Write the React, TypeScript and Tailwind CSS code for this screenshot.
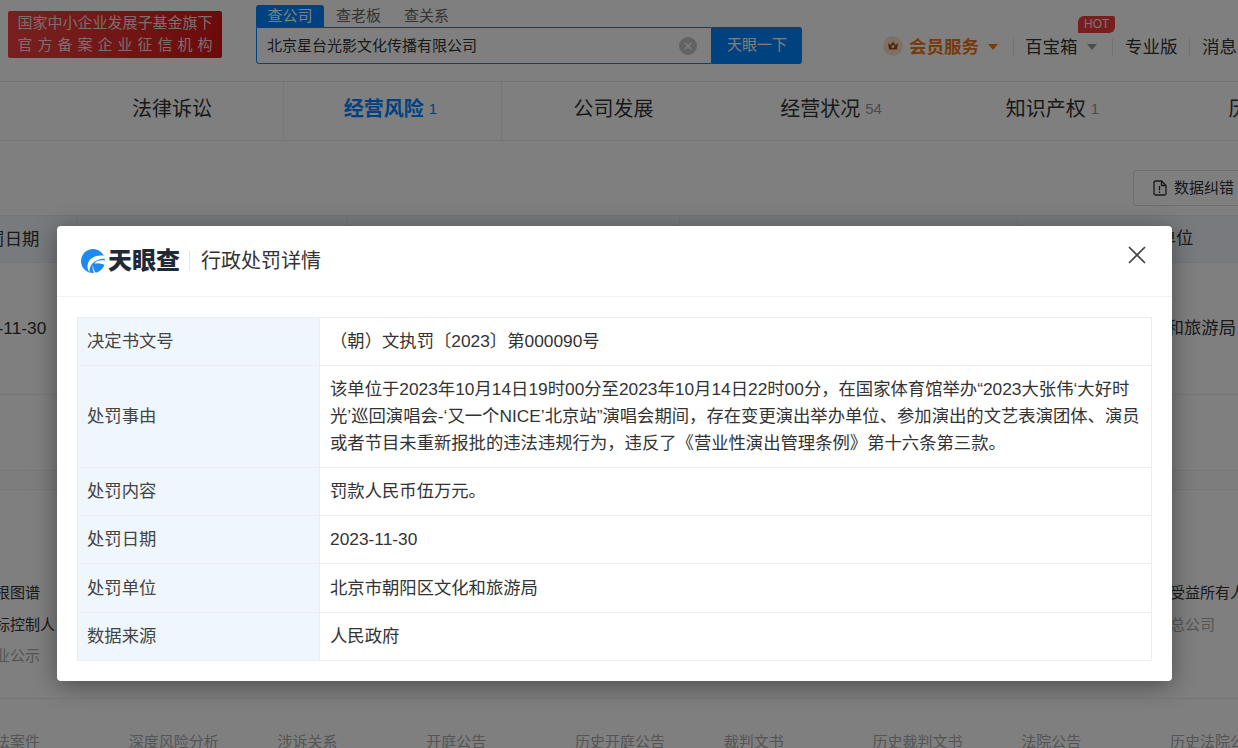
import { X } from 'lucide-react';

const FONT = "font-['Liberation_Sans','Noto_Sans_CJK_SC',sans-serif]";

const navItems = [
  { name: '法律诉讼', nudge: 'pr-[3px]' },
  { name: '经营风险', count: '1', active: true, nudge: 'pr-[4px]' },
  { name: '公司发展', nudge: 'pl-[4px]' },
  { name: '经营状况', count: '54', nudge: 'pl-[1px]' },
  { name: '知识产权', count: '1', nudge: 'pl-[6px]' },
  { name: '历史信息', nudge: '' },
];

const bottomLinks = ['执法案件', '深度风险分析', '涉诉关系', '开庭公告', '历史开庭公告', '裁判文书', '历史裁判文书', '法院公告', '历史法院公告'];

const rows = [
  { label: '决定书文号', value: '（朝）文执罚〔2023〕第000090号', height: 'h-[48px]' },
  {
    label: '处罚事由',
    value: '该单位于2023年10月14日19时00分至2023年10月14日22时00分，在国家体育馆举办“2023大张伟‘大好时光’巡回演唱会-‘又一个NICE’北京站”演唱会期间，存在变更演出举办单位、参加演出的文艺表演团体、演员或者节目未重新报批的违法违规行为，违反了《营业性演出管理条例》第十六条第三款。',
    height: 'h-[102px]',
  },
  { label: '处罚内容', value: '罚款人民币伍万元。', height: 'h-[48px]' },
  { label: '处罚日期', value: '2023-11-30', height: 'h-[48px]' },
  { label: '处罚单位', value: '北京市朝阳区文化和旅游局', height: 'h-[49px]' },
  { label: '数据来源', value: '人民政府', height: 'h-[48px]' },
];

function Caret({ className }: { className: string }) {
  return (
    <svg width="12" height="8" viewBox="0 0 12 8" className={className}>
      <path d="M1 1h10L6 7z" fill="currentColor" />
    </svg>
  );
}

function Logo() {
  return (
    <svg width="24" height="24" viewBox="0 0 24 24" className="shrink-0">
      <circle cx="12" cy="12" r="12" fill="#1e8af0" />
      {/* swoosh from the upper right down to the lower left */}
      <path d="M23.500 7C16 5.500 8.500 8.500 6.800 15c-.7 3-.1 6 1.700 8.300C8 17 11.500 10.500 24 9.500z" fill="#fff" />
      {/* notch on the right side */}
      <path d="M24 11.500c-4.500-.6-9 .2-10.500 3.200 3-1.200 6.500-.4 10.500 1.300z" fill="#fff" />
      <path d="M11.800 15.500c.2 3.500 1.200 6.300 3.200 8.700l-1.800.3c-1.500-2.800-2-6-1.400-9z" fill="#fff" />
    </svg>
  );
}

function Header() {
  return (
    <div className="flex h-[82px] border-b border-[#e8e8e8] bg-white">
      <div className="ml-[8px] mt-[11px] flex h-[47px] w-[214px] flex-col items-center justify-center rounded-[2px] bg-gradient-to-r from-[#f04040] to-[#d81414] pb-[2px] text-[15px] leading-[22px] text-[#f5dcdc]">
        <span>国家中小企业发展子基金旗下</span>
        <span className="mr-[-5px] tracking-[5px]">官方备案企业征信机构</span>
      </div>

      <div className="ml-[34px] mt-[5px] w-[546px]">
        <div className="flex h-[22px] items-center text-[15px]">
          <span className="flex h-[22px] w-[68px] items-center justify-center rounded-t-[3px] bg-[#0084ff] text-white">查公司</span>
          <span className="ml-[12px] text-[#666]">查老板</span>
          <span className="ml-[23px] text-[#666]">查关系</span>
        </div>
        <div className="flex h-[37px]">
          <div className="flex flex-1 items-center rounded-bl-[3px] border border-[#0084ff] bg-white pl-[10px] pr-[14px] text-[15px] text-[#333]">
            <span className="flex-1 pt-[1px]">北京星台光影文化传播有限公司</span>
            <span className="flex h-[18px] w-[18px] items-center justify-center rounded-full bg-[#c4c4c4]">
              <X size={12} strokeWidth={2.5} className="text-white" />
            </span>
          </div>
          <div className="flex w-[90px] items-center justify-center rounded-r-[3px] bg-[#0084ff] text-[15px] text-white">天眼一下</div>
        </div>
      </div>

      <div className="relative ml-[81px] flex h-[82px] items-center whitespace-nowrap pt-[12px] text-[17.5px] text-[#333]">
        <svg width="20" height="20" viewBox="0 0 20 20" className="shrink-0 -translate-y-[1px]">
          <circle cx="10" cy="10" r="10" fill="#fbe3cf" />
          <path d="M5 7l2.500 2L10 5.500 12.500 9 15 7l-1 6.500H6z" fill="#a34d0a" />
          <circle cx="10" cy="10.500" r="1.500" fill="#fbe3cf" />
        </svg>
        <span className="ml-[6px] font-bold text-[#e8791c]">会员服务</span>
        <Caret className="ml-[8px] text-[#f07a14]" />
        <span className="ml-[14px] h-[18px] w-px bg-[#e4e4e4]" />
        <span className="ml-[11px]">百宝箱</span>
        <Caret className="ml-[8.5px] text-[#999]" />
        <span className="absolute left-[195px] top-[16px] rounded-tl-[6px] rounded-tr-[2px] rounded-br-[6px] bg-[#f03c3c] px-[6px] text-[12px] leading-[17px] text-[#eee]">HOT</span>
        <span className="ml-[14px] h-[18px] w-px bg-[#e4e4e4]" />
        <span className="ml-[12px]">专业版</span>
        <span className="ml-[11.5px] h-[18px] w-px bg-[#e4e4e4]" />
        <span className="ml-[12px]">消息</span>
      </div>
    </div>
  );
}

function Nav() {
  return (
    <div className="flex h-[59px] overflow-hidden border-b border-[#eeeeee] bg-white pb-[4px] pl-[64px]">
      {navItems.map((item) => (
        <div
          key={item.name}
          className={item.active
            ? `-mb-[4px] flex w-[219px] shrink-0 items-center justify-center border-x border-[#eeeeee] pb-[4px] text-[20px] font-bold text-[#0084ff] ${item.nudge}`
            : `flex w-[219px] shrink-0 items-center justify-center text-[20px] text-[#333] ${item.nudge}`}
        >
          <span>{item.name}</span>
          {item.count && (
            <span className={item.active ? 'ml-[5px] text-[15px] font-normal text-[#0084ff]' : 'ml-[5px] text-[15px] text-[#999]'}>{item.count}</span>
          )}
        </div>
      ))}
    </div>
  );
}

function PageBody() {
  return (
    <div className="overflow-hidden text-[15px]">
      <div className="flex h-[65px] items-end overflow-hidden pl-[1133px]">
        <div className="flex h-[36px] w-[130px] shrink-0 items-center rounded-[3px] border border-[#dddddd] pl-[19px] text-[#333]">
          <svg width="14" height="16" viewBox="0 0 14 16" fill="none" stroke="#333" strokeWidth="1.300" className="shrink-0">
            <path d="M3 1h5.500L13 5.500v8a1.500 1.500 0 0 1-1.500 1.500h-9A1.500 1.500 0 0 1 1 13.500V3a2 2 0 0 1 2-2z" />
            <path d="M8.500 1v4.500H13M6.500 6v4.500M6.500 11.500v1.500" />
          </svg>
          <span className="ml-[7px] whitespace-nowrap">数据纠错</span>
        </div>
      </div>
      <div className="mt-[9px] grid h-[48px] grid-cols-[78px_269px_333px_338px_1fr] items-center border-y border-[#e8edf2] bg-[#f0f5fa] text-[17.33px] text-[#333]">
        <span className="-ml-[30px] h-full whitespace-nowrap border-r border-[#e4e9ee] leading-[46px]">处罚日期</span>
        <span className="h-full border-r border-[#e4e9ee]" />
        <span className="h-full border-r border-[#e4e9ee]" />
        <span className="h-full border-r border-[#e4e9ee]" />
        <span className="whitespace-nowrap pl-[106px]">处罚单位</span>
      </div>
      <div className="flex h-[132px] items-center justify-between border-b border-[#eeeeee] text-[17.33px] text-[#333]">
        <span className="-ml-[41px] whitespace-nowrap">2023-11-30</span>
        <span className="mr-[2px] whitespace-nowrap">文化和旅游局</span>
      </div>
      <div className="h-[75px]" />
      <div className="h-[20px] border-y border-[#eeeeee] bg-[#fafafa]" />
      <div className="ml-[-20px] mt-[92px] grid grid-cols-[repeat(9,148.75px)] gap-y-[10px] leading-[21.500px] text-[#333]">
        <span>追根图谱</span><span /><span /><span /><span /><span /><span /><span /><span className="whitespace-nowrap">受益所有人</span>
        <span>目标控制人</span><span /><span /><span /><span /><span /><span /><span /><span className="text-[#aaa]">总公司</span>
        <span className="text-[#aaa]">企业公示</span>
      </div>
      <div className="mt-[31px] border-t border-[#eeeeee]" />
      <div className="ml-[-20px] mt-[32px] grid grid-cols-[repeat(9,148.75px)] text-[#aaa]">
        {bottomLinks.map((link) => (
          <span key={link} className="whitespace-nowrap">{link}</span>
        ))}
      </div>
    </div>
  );
}

function PunishmentModal() {
  return (
    <div className="absolute left-[57px] top-[226px] w-[1115px] rounded-[4px] bg-white shadow-[0_4px_24px_rgba(0,0,0,0.4)]">
      <div className="flex h-[71px] items-center border-b border-[#f0f3f6] pl-[24px] pr-[20px]">
        <Logo />
        <span className="ml-[3px] text-[24px] font-black leading-none text-[#1f2a36]">天眼查</span>
        <span className="ml-[9px] h-[20px] w-px bg-[#e0e4e8]" />
        <span className="ml-[11px] text-[20px] text-[#333]">行政处罚详情</span>
        <X size={30} strokeWidth={1.4} className="-mt-[12px] ml-auto text-[#444]" />
      </div>
      <div className="p-[20px]">
        <table className="w-full table-fixed border-collapse border border-[#e8eef3] text-[17.33px] leading-[27px]">
          <colgroup>
            <col className="w-[242px]" />
            <col />
          </colgroup>
          <tbody>
            {rows.map((row) => (
              <tr key={row.label} className={row.height}>
                <td className="border border-[#e8eef3] bg-[#eff6fc] pl-[9px] text-[#444]">{row.label}</td>
                <td className="border border-[#e8eef3] pl-[10px] pr-[8px] text-[#333]">{row.value}</td>
              </tr>
            ))}
          </tbody>
        </table>
      </div>
    </div>
  );
}

export default function App() {
  return (
    <div className={`relative h-[748px] w-full overflow-hidden bg-white ${FONT}`}>
      <Header />
      <Nav />
      <PageBody />
      <div className="absolute inset-0 bg-black/50" />
      <PunishmentModal />
    </div>
  );
}
